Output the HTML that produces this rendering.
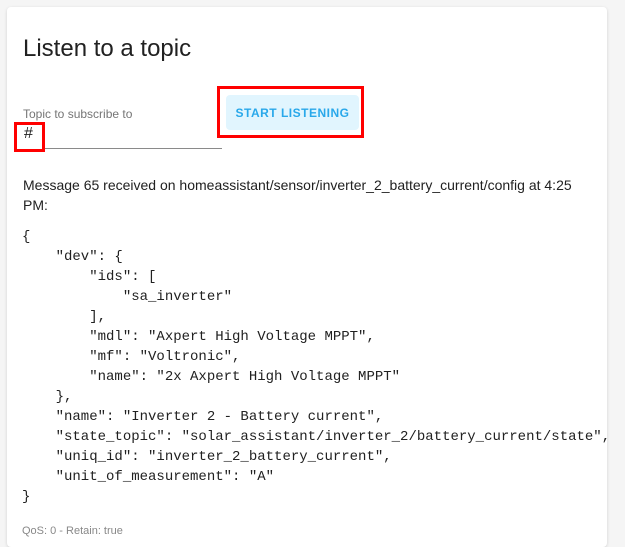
<!DOCTYPE html>
<html><head><meta charset="utf-8"><style>
body{margin:0;width:625px;height:533px;background:#f5f5f5;font-family:"Liberation Sans",sans-serif;overflow:hidden;position:relative}
.card{position:absolute;left:7px;top:7px;width:600px;height:540px;background:#fff;border-radius:4px;box-shadow:0 1px 3px rgba(0,0,0,.15)}
.t{position:absolute;left:23px;top:35px;font-size:24px;color:#212121}
.lbl{position:absolute;left:23px;top:107px;font-size:12px;color:#757575}
.hash{position:absolute;left:24px;top:125px;font-size:16px;color:#212121}
.ul{position:absolute;left:45px;top:148px;width:177px;height:1px;background:#8a8a8a}
.rb1{position:absolute;left:14px;top:122px;width:25px;height:24px;border:3px solid #f00}
.rb2{position:absolute;left:217px;top:86px;width:141px;height:46px;border:3px solid #f00}
.btn{position:absolute;left:226px;top:95px;width:133px;height:35px;background:#e1f5fe;border-radius:4px;color:#29a8ea;font-size:12px;font-weight:bold;letter-spacing:0.5px;text-align:center;line-height:37px}
.msg{position:absolute;left:23px;top:175px;width:570px;font-size:14px;line-height:20px;color:#212121}
pre{position:absolute;left:22px;top:227px;margin:0;font-family:"Liberation Mono",monospace;font-size:14px;line-height:20px;color:#212121}
.q{position:absolute;left:22px;top:525px;font-size:11px;color:#888}
</style></head><body>
<div class="card"></div>
<div class="t">Listen to a topic</div>
<div class="lbl">Topic to subscribe to</div>
<div class="hash">#</div>
<div class="ul"></div>
<div class="rb1"></div>
<div class="btn">START LISTENING</div>
<div class="rb2"></div>
<div class="msg">Message 65 received on homeassistant/sensor/inverter_2_battery_current/config at 4:25 PM:</div>
<pre>{
    "dev": {
        "ids": [
            "sa_inverter"
        ],
        "mdl": "Axpert High Voltage MPPT",
        "mf": "Voltronic",
        "name": "2x Axpert High Voltage MPPT"
    },
    "name": "Inverter 2 - Battery current",
    "state_topic": "solar_assistant/inverter_2/battery_current/state",
    "uniq_id": "inverter_2_battery_current",
    "unit_of_measurement": "A"
}</pre>
<div class="q">QoS: 0 - Retain: true</div>
</body></html>
